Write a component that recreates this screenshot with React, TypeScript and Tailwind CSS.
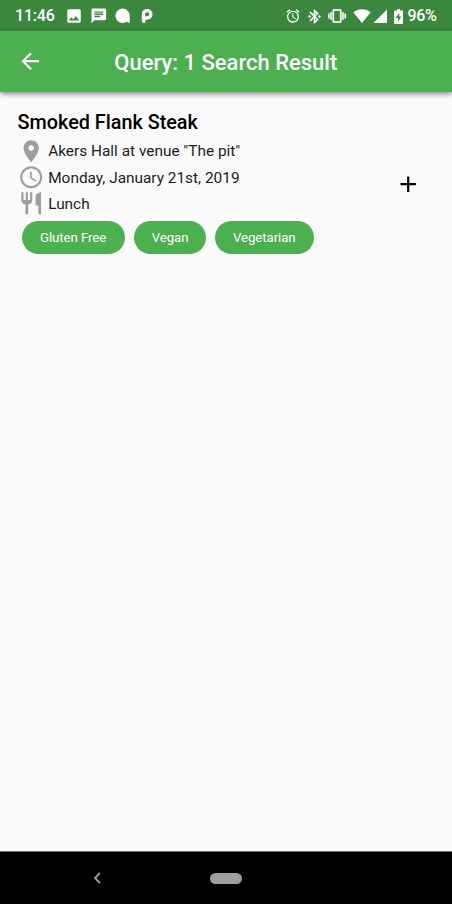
import type { ReactNode } from "react";

function Icon({ className, viewBox = "0 0 24 24", children }: { className: string; viewBox?: string; children: ReactNode }) {
  return (
    <svg viewBox={viewBox} fill="currentColor" className={`block shrink-0 ${className}`}>
      {children}
    </svg>
  );
}

function StatusBar() {
  return (
    <div className="flex h-[31px] items-center bg-[#3b873e] pt-px pl-[15px] text-[16px] text-white">
      <span className="w-[50px] font-medium tracking-[-0.200px] whitespace-nowrap">11:46</span>
      <Icon className="size-[18px]">
        <path d="M21 19V5c0-1.100-.9-2-2-2H5c-1.100 0-2 .9-2 2v14c0 1.100.9 2 2 2h14c1.100 0 2-.9 2-2zM8.500 13.500l2.500 3.010L14.500 12l4.500 6H5l3.500-4.500z" />
      </Icon>
      <Icon className="ml-[6.500px] size-[17.600px]">
        <path d="M20 2H4c-1.100 0-1.990.9-1.990 2L2 22l4-4h14c1.100 0 2-.9 2-2V4c0-1.100-.9-2-2-2zM6 9h12v2H6V9zm8 5H6v-2h8v2zm4-6H6V6h12v2z" />
      </Icon>
      <Icon className="ml-[8px] h-[16px] w-[16px]" viewBox="0 0 16 16">
        <path d="M7.500.6a7.200 7.200 0 1 0 2.500 14c.8-.3 1.500-.7 2-1.100.6.8 1.300 1.200 2.700 1.500V8A7.200 7.200 0 0 0 7.500.6z" />
      </Icon>
      <Icon className="ml-[8.500px] h-[16px] w-[14px]" viewBox="0 0 14 16">
        <path fillRule="evenodd" d="M7.200 1C4 1 1.800 3.200 1.800 6.200v6.700c0 1.300.7 2 1.900 2s1.900-.7 1.900-2v-1.600c.5.200 1 .3 1.600.3 3.100 0 5.300-2.300 5.300-5.300S10.300 1 7.200 1zM7.200 4.300a2 2 0 1 1 0 4c-.6 0-1.100-.2-1.500-.5v.8c0 .5-.2.800-.5.800V6.300c0-1.200.8-2 2-2z" />
      </Icon>
      <div className="ml-auto flex items-center pr-[15.500px]">
        <Icon className="size-[16px]">
          <path d="M22 5.720l-4.600-3.860-1.290 1.530 4.600 3.860L22 5.720zM7.880 3.390L6.600 1.860 2 5.710l1.290 1.530 4.590-3.850zM12.500 8H11v6l4.750 2.850.75-1.230-4-2.370V8zM12 4c-4.970 0-9 4.030-9 9s4.020 9 9 9a9 9 0 0 0 0-18zm0 16c-3.870 0-7-3.130-7-7s3.130-7 7-7 7 3.130 7 7-3.130 7-7 7z" />
        </Icon>
        <Icon className="ml-[5px] size-[17px]">
          <path stroke="currentColor" strokeWidth=".3" d="M17.710 7.710L12 2h-1v7.590L6.410 5 5 6.410 10.590 12 5 17.590 6.410 19 11 14.410V22h1l5.710-5.710-4.300-4.290 4.300-4.290zM13 5.830l1.880 1.880L13 9.590V5.830zm1.880 10.460L13 18.170v-3.760l1.880 1.880zM7 12l-2-2-2 2 2 2 2-2zm12-2l-2 2 2 2 2-2-2-2z" />
        </Icon>
        <Icon className="ml-[5px] size-[18px]">
          <path stroke="currentColor" strokeWidth=".3" d="M0 15h2V9H0v6zm3 2h2V7H3v10zm19-8v6h2V9h-2zm-3 8h2V7h-2v10zM16.500 3h-9C6.670 3 6 3.670 6 4.500v15c0 .83.67 1.500 1.500 1.500h9c.83 0 1.500-.67 1.500-1.500v-15c0-.83-.67-1.500-1.500-1.500zM16 19H8V5h8v14z" />
        </Icon>
        <Icon className="ml-[7px] h-[14px] w-[18px]" viewBox="0 0 18 14">
          <path d="M9 14L.3 3.300C2.700 1.300 5.700.3 9 .3s6.300 1 8.700 3L9 14z" />
        </Icon>
        <Icon className="ml-[1.500px] size-[14px]" viewBox="0 0 14 14">
          <path d="M.5 14L14 .5V14z" />
        </Icon>
        <Icon className="ml-[7px] h-[15px] w-[9px]" viewBox="0 0 9 15">
          <path fillRule="evenodd" d="M1 1.500h2V0h3v1.500h2c.6 0 1 .4 1 1V14c0 .6-.4 1-1 1H1c-.6 0-1-.4-1-1V2.500c0-.6.400-1 1-1zM5.200 3.700L1.700 9h2.400v3.700L7.400 7.500H5.200z" />
        </Icon>
        <span className="ml-[4.500px] font-medium tracking-[-0.300px] whitespace-nowrap">96%</span>
      </div>
    </div>
  );
}

function DetailRow({ icon, text }: { icon: ReactNode; text: string }) {
  return (
    <div className="flex h-[26.400px] items-center">
      <Icon className="mr-[4.200px] size-[26.400px] text-[#9e9e9e]">{icon}</Icon>
      <span className="pt-[2px] text-[15.400px] whitespace-nowrap text-[#1c1c1c]">{text}</span>
    </div>
  );
}

export default function App() {
  return (
    <div className="flex h-[904px] w-[452px] flex-col overflow-hidden bg-[#fafafa] font-[Roboto,sans-serif]">
      <StatusBar />
      <header className="relative flex h-[61px] shrink-0 items-center bg-[#4caf50] text-white shadow-[0_2px_5px_rgba(0,0,0,0.45)]">
        <Icon className="ml-[17.400px] size-[26.400px]">
          <path d="M20 11H7.830l5.590-5.590L12 4l-8 8 8 8 1.410-1.410L7.830 13H20v-2z" />
        </Icon>
        <h1 className="ml-[70.500px] pt-[2px] text-[22px] font-medium whitespace-nowrap">Query: 1 Search Result</h1>
      </header>
      <main className="flex flex-1 items-start pt-[17.500px] pl-[17.600px]">
        <div className="flex-1">
          <h2 className="h-[28px] text-[19.800px] leading-[25px] font-medium whitespace-nowrap text-black">Smoked Flank Steak</h2>
          <DetailRow icon={<path d="M12 2C8.130 2 5 5.130 5 9c0 5.250 7 13 7 13s7-7.750 7-13c0-3.870-3.130-7-7-7zm0 9.500a2.500 2.500 0 0 1 0-5 2.500 2.500 0 0 1 0 5z" />} text={'Akers Hall at venue "The pit"'} />
          <DetailRow icon={<path d="M11.990 2C6.470 2 2 6.480 2 12s4.470 10 9.990 10C17.520 22 22 17.520 22 12S17.520 2 11.990 2zM12 20c-4.420 0-8-3.580-8-8s3.580-8 8-8 8 3.580 8 8-3.580 8-8 8zm.5-13H11v6l5.250 3.150.75-1.230-4.500-2.670V7z" />} text="Monday, January 21st, 2019" />
          <DetailRow icon={<path d="M11 9H9V2H7v7H5V2H3v7c0 2.120 1.660 3.840 3.750 3.970V22h2.500v-9.030C11.340 12.840 13 11.120 13 9V2h-2v7zm5-3v8h2.500v8H21V2c-2.760 0-5 2.240-5 4z" />} text="Lunch" />
          <div className="mt-[4px] ml-[4.400px] flex gap-[8.500px] text-[13.200px] text-white">
            <span className="flex h-[33px] w-[103.300px] items-center justify-center rounded-full bg-[#4caf50] pt-px pr-px tracking-[-0.050px]">Gluten Free</span>
            <span className="flex h-[33px] w-[72.500px] items-center justify-center rounded-full bg-[#4caf50] pt-px tracking-[-0.050px]">Vegan</span>
            <span className="flex h-[33px] w-[99px] items-center justify-center rounded-full bg-[#4caf50] pt-px tracking-[-0.050px]">Vegetarian</span>
          </div>
        </div>
        <Icon className="mt-[61px] mr-[31px] size-[26.400px] text-black">
          <path d="M19 13h-6v6h-2v-6H5v-2h6V5h2v6h6v2z" />
        </Icon>
      </main>
      <nav className="flex h-[53px] items-center border-t border-[#777] bg-black text-[#9e9e9e]">
        <svg viewBox="0 0 8 12" className="ml-[93px] block h-[12px] w-[8px]" fill="none" stroke="currentColor" strokeWidth="1.800">
          <path d="M7 1L2 6l5 5" />
        </svg>
        <span className="ml-[109px] h-[11px] w-[32px] rounded-full bg-[#9e9e9e]" />
      </nav>
    </div>
  );
}
